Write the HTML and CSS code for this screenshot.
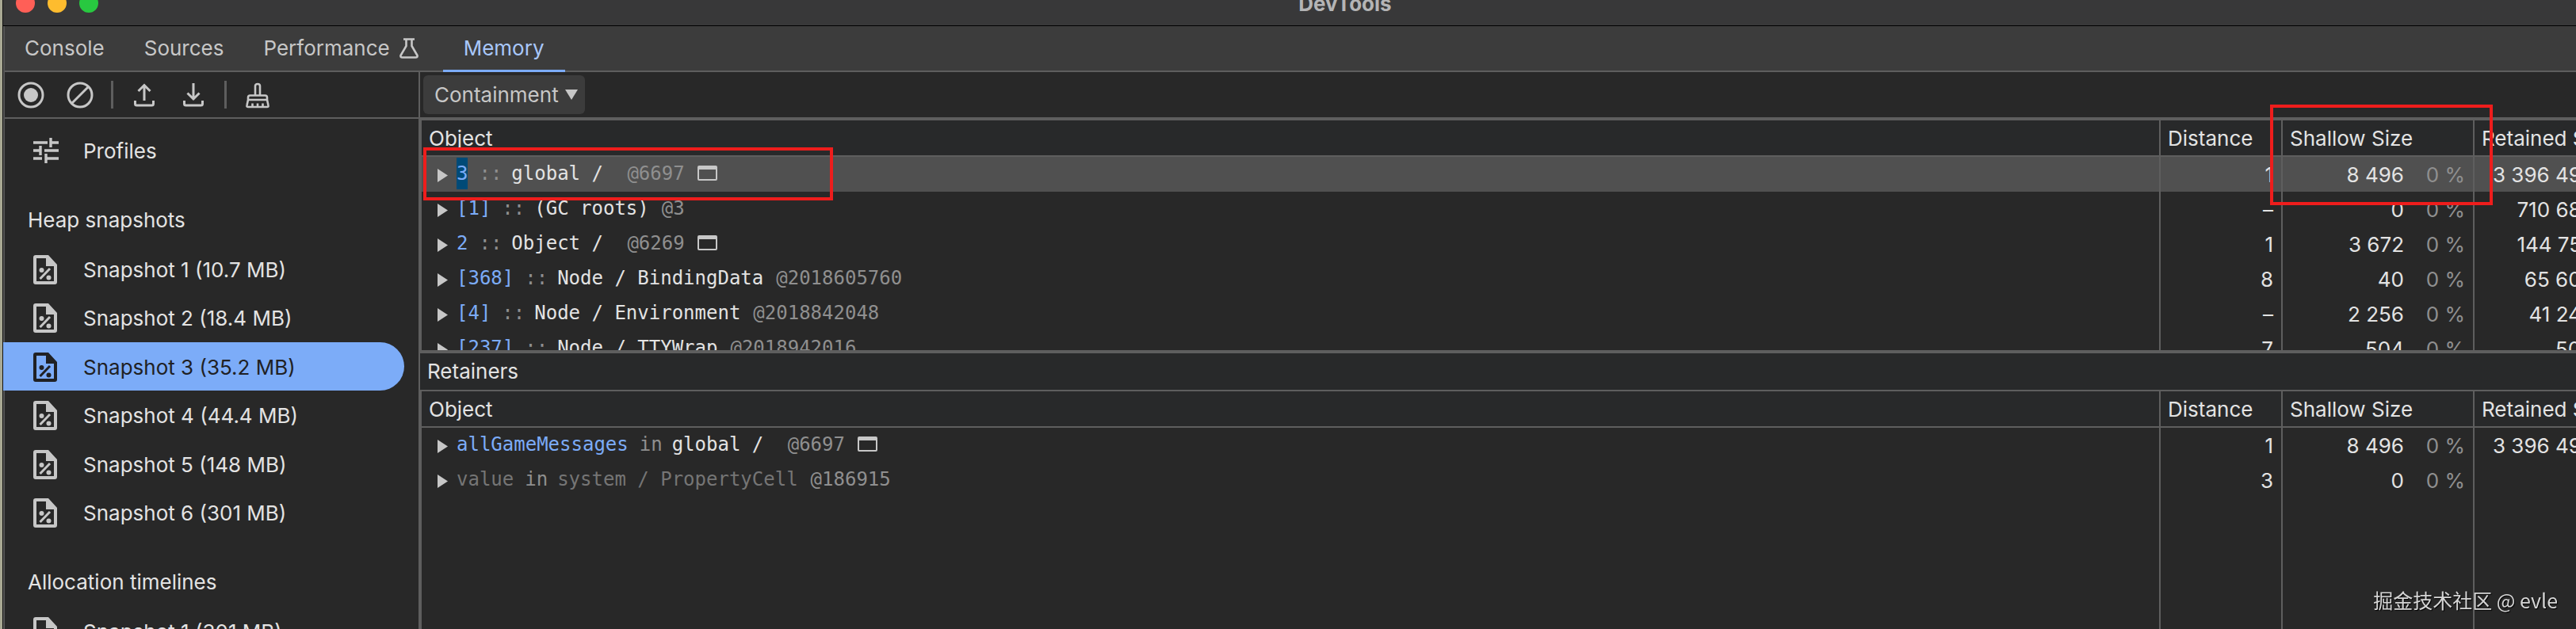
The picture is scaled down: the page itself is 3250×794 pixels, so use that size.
FILE: index.html
```html
<!DOCTYPE html>
<html lang="en">
<head>
    <meta charset="UTF-8">
    <meta name="viewport" content="width=device-width, initial-scale=1.0">
    <title>DevTools</title>
    <link rel="stylesheet" href="styles.css">
</head>
<body>
    <!-- Shared icons -->
    <svg class="icon-defs" aria-hidden="true">
        <symbol id="icon-snapshot" viewBox="0 0 30 37">
            <path fill="currentColor" fill-rule="evenodd" d="M3 0H19L30 12V34Q30 37 27 37H3Q0 37 0 34V3Q0 0 3 0ZM4 4V33H26V14H16V4Z"/>
            <path fill="none" stroke="currentColor" stroke-width="3" d="M8.500 30L21 17"/>
            <circle fill="currentColor" cx="10.500" cy="19" r="3"/>
            <circle fill="currentColor" cx="19.500" cy="28.500" r="3"/>
        </symbol>
        <symbol id="icon-arrow" viewBox="0 0 13 17">
            <path fill="currentColor" d="M0 0L13 8.500L0 17Z"/>
        </symbol>
        <symbol id="icon-window" viewBox="0 0 25 19">
            <path fill="currentColor" fill-rule="evenodd" d="M2 0H23Q25 0 25 2V17Q25 19 23 19H2Q0 19 0 17V2Q0 0 2 0ZM2 5V17H23V5Z"/>
        </symbol>
    </svg>

    <div class="window">
        <header class="title-bar">
            <span class="light red"></span>
            <span class="light yellow"></span>
            <span class="light green"></span>
            <h1>DevTools</h1>
        </header>

        <div class="content">
            <nav class="tabs">
                <a href="#console">Console</a>
                <a href="#sources">Sources</a>
                <a href="#performance">Performance
                    <svg width="24" height="26" viewBox="0 0 24 26" fill="none" stroke="currentColor" stroke-width="2.600" stroke-linejoin="round">
                        <path d="M5 1.500H19M8.500 2V10L1.500 22Q1 24.500 3.500 24.500H20.500Q23 24.500 22.500 22L15.500 10V2"/>
                    </svg>
                </a>
                <a href="#memory" class="active">Memory</a>
            </nav>

            <div class="panels">
                <aside class="sidebar">
                    <div class="toolbar">
                        <button type="button" aria-label="Take heap snapshot">
                            <svg width="34" height="34" viewBox="0 0 34 34"><circle cx="17" cy="17" r="15" fill="none" stroke="currentColor" stroke-width="3"/><circle cx="17" cy="17" r="9" fill="currentColor"/></svg>
                        </button>
                        <button type="button" aria-label="Clear all profiles">
                            <svg width="34" height="34" viewBox="0 0 34 34" fill="none" stroke="currentColor" stroke-width="3"><circle cx="17" cy="17" r="15"/><path d="M6.500 27.500L27.500 6.500"/></svg>
                        </button>
                        <span class="separator"></span>
                        <button type="button" aria-label="Load profile">
                            <svg width="34" height="34" viewBox="0 0 34 34" fill="none" stroke="currentColor" stroke-width="3"><path d="M17 24V4M9.500 12L17 4.500L24.500 12M5.500 24V28Q5.500 30 7.500 30H26.500Q28.500 30 28.500 28V24"/></svg>
                        </button>
                        <button type="button" aria-label="Save profile">
                            <svg width="34" height="34" viewBox="0 0 34 34" fill="none" stroke="currentColor" stroke-width="3"><path d="M17 2V22M9.500 14.500L17 22L24.500 14.500M5.500 24V28Q5.500 30 7.500 30H26.500Q28.500 30 28.500 28V24"/></svg>
                        </button>
                        <span class="separator"></span>
                        <button type="button" aria-label="Collect garbage">
                            <svg width="34" height="34" viewBox="0 0 34 34" fill="none" stroke="currentColor" stroke-width="2.600" stroke-linejoin="round"><path d="M14 17V5.500Q14 3 17 3T20 5.500V17M5 23V20Q5 17.500 7.500 17.500H26.500Q29 17.500 29 20V23ZM5 23L3.500 30Q3 32 5 32H29Q31 32 30.500 30L29 23M10.500 32V27.500M17 32V27.500M23.500 32V27.500"/></svg>
                        </button>
                    </div>

                    <div class="profiles">
                        <a href="#profiles" class="item">
                            <svg width="32" height="32" viewBox="0 0 32 32" fill="none" stroke="currentColor" stroke-width="3.400"><path d="M0 6H18M22 0V12M22 6H32M0 16H9M9 10V22M14 16H32M0 26H11M16 20V32M16 26H32"/></svg>
                            Profiles
                        </a>
                        <h2>Heap snapshots</h2>
                        <div class="snapshots">
                            <a href="#heap1" class="item"><svg width="30" height="37"><use href="#icon-snapshot"/></svg>Snapshot 1 (10.7 MB)</a>
                            <a href="#heap2" class="item"><svg width="30" height="37"><use href="#icon-snapshot"/></svg>Snapshot 2 (18.4 MB)</a>
                            <a href="#heap3" class="item selected"><svg width="30" height="37"><use href="#icon-snapshot"/></svg>Snapshot 3 (35.2 MB)</a>
                            <a href="#heap4" class="item"><svg width="30" height="37"><use href="#icon-snapshot"/></svg>Snapshot 4 (44.4 MB)</a>
                            <a href="#heap5" class="item"><svg width="30" height="37"><use href="#icon-snapshot"/></svg>Snapshot 5 (148 MB)</a>
                            <a href="#heap6" class="item"><svg width="30" height="37"><use href="#icon-snapshot"/></svg>Snapshot 6 (301 MB)</a>
                        </div>
                        <h2>Allocation timelines</h2>
                        <div class="snapshots">
                            <a href="#timeline1" class="item"><svg width="30" height="37"><use href="#icon-snapshot"/></svg>Snapshot 1 (301 MB)</a>
                        </div>
                    </div>
                </aside>

                <main class="main">
                    <div class="toolbar">
                        <div class="perspective">
                            <select aria-label="Perspective">
                                <option>Containment</option>
                            </select>
                            <svg width="16" height="13" viewBox="0 0 16 13"><path fill="currentColor" d="M0 0H16L8 13Z"/></svg>
                        </div>
                    </div>

                    <section class="grid objects">
                        <table>
                            <colgroup><col><col class="col-distance"><col class="col-shallow"><col class="col-retained"></colgroup>
                            <thead>
                                <tr><th>Object</th><th>Distance</th><th>Shallow Size</th><th>Retained Size</th></tr>
                            </thead>
                            <tbody>
                                <tr class="selected">
                                    <td><div class="object"><svg class="arrow"><use href="#icon-arrow"/></svg><span class="key marked">3</span><span class="sep">::</span><span class="name">global / </span><span class="id">@6697</span><svg class="link"><use href="#icon-window"/></svg></div></td>
                                    <td>1</td>
                                    <td>8 496<span class="percent">0 %</span></td>
                                    <td>3 396 496<span class="percent">10 %</span></td>
                                </tr>
                                <tr>
                                    <td><div class="object"><svg class="arrow"><use href="#icon-arrow"/></svg><span class="key">[1]</span><span class="sep">::</span><span class="name">(GC roots)</span><span class="id">@3</span></div></td>
                                    <td>–</td>
                                    <td>0<span class="percent">0 %</span></td>
                                    <td>710 680<span class="percent">2 %</span></td>
                                </tr>
                                <tr>
                                    <td><div class="object"><svg class="arrow"><use href="#icon-arrow"/></svg><span class="key">2</span><span class="sep">::</span><span class="name">Object / </span><span class="id">@6269</span><svg class="link"><use href="#icon-window"/></svg></div></td>
                                    <td>1</td>
                                    <td>3 672<span class="percent">0 %</span></td>
                                    <td>144 752<span class="percent">0 %</span></td>
                                </tr>
                                <tr>
                                    <td><div class="object"><svg class="arrow"><use href="#icon-arrow"/></svg><span class="key">[368]</span><span class="sep">::</span><span class="name">Node / BindingData</span><span class="id">@2018605760</span></div></td>
                                    <td>8</td>
                                    <td>40<span class="percent">0 %</span></td>
                                    <td>65 600<span class="percent">0 %</span></td>
                                </tr>
                                <tr>
                                    <td><div class="object"><svg class="arrow"><use href="#icon-arrow"/></svg><span class="key">[4]</span><span class="sep">::</span><span class="name">Node / Environment</span><span class="id">@2018842048</span></div></td>
                                    <td>–</td>
                                    <td>2 256<span class="percent">0 %</span></td>
                                    <td>41 248<span class="percent">0 %</span></td>
                                </tr>
                                <tr>
                                    <td><div class="object"><svg class="arrow"><use href="#icon-arrow"/></svg><span class="key">[237]</span><span class="sep">::</span><span class="name">Node / TTYWrap</span><span class="id">@2018942016</span></div></td>
                                    <td>7</td>
                                    <td>504<span class="percent">0 %</span></td>
                                    <td>504<span class="percent">0 %</span></td>
                                </tr>
                            </tbody>
                        </table>
                    </section>

                    <h3>Retainers</h3>

                    <section class="grid retainers">
                        <table>
                            <colgroup><col><col class="col-distance"><col class="col-shallow"><col class="col-retained"></colgroup>
                            <thead>
                                <tr><th>Object</th><th>Distance</th><th>Shallow Size</th><th>Retained Size</th></tr>
                            </thead>
                            <tbody>
                                <tr>
                                    <td><div class="object"><svg class="arrow"><use href="#icon-arrow"/></svg><span class="key">allGameMessages</span><span class="sep">in</span><span class="name">global / </span><span class="id">@6697</span><svg class="link"><use href="#icon-window"/></svg></div></td>
                                    <td>1</td>
                                    <td>8 496<span class="percent">0 %</span></td>
                                    <td>3 396 496<span class="percent">10 %</span></td>
                                </tr>
                                <tr class="internal">
                                    <td><div class="object"><svg class="arrow"><use href="#icon-arrow"/></svg><span class="key">value</span><span class="sep">in</span><span class="name">system / PropertyCell</span><span class="id">@186915</span></div></td>
                                    <td>3</td>
                                    <td>0<span class="percent">0 %</span></td>
                                    <td></td>
                                </tr>
                                <tr class="filler"><td></td><td></td><td></td><td></td></tr>
                            </tbody>
                        </table>
                    </section>

                    <div class="highlight highlight-object"></div>
                    <div class="highlight highlight-size"></div>
                </main>
            </div>
        </div>
    </div>
    <div class="watermark">掘金技术社区 @ evle</div>
</body>
</html>
```
FILE: styles.css
```css
* {
    box-sizing: border-box;
}
body {
    margin: 0;
    padding-left: 3px;
    height: 100vh;
    overflow: hidden;
    background-color: #a9a994;
    color: #e3e3e3;
    font-family: Inter, Roboto, sans-serif;
    font-size: 26px;
}
h1, h2, h3 {
    margin: 0;
    font-size: 26px;
    font-weight: normal;
}
a {
    color: inherit;
    text-decoration: none;
}
.icon-defs {
    display: none;
}
/* The window runs past the right edge of the page */
.window {
    width: calc(100% + 140px);
    height: 100vh;
    display: flex;
    flex-direction: column;
    border-left: 1px solid #111;
    background-color: #282828;
}
.title-bar {
    flex: none;
    height: 57px;
    margin-top: -24px;
    padding: 0 16px;
    display: flex;
    align-items: center;
    gap: 16px;
    background-color: #383839;
    border-bottom: 1px solid #000;
}
.title-bar h1 {
    flex: 1;
    padding-right: 120px;
    text-align: center;
    font-size: 26px;
    font-weight: bold;
    color: #b4b4b5;
}
.light {
    width: 24px;
    height: 24px;
    border-radius: 50%;
}
.red {
    background-color: #ff5f57;
}
.yellow {
    background-color: #febc2e;
}
.green {
    background-color: #28c840;
}
.content {
    flex: 1;
    min-height: 0;
    display: flex;
    flex-direction: column;
    border-left: 2px solid #565656;
}
.tabs {
    flex: none;
    height: 58px;
    display: flex;
    background-color: #3c3c3c;
    border-bottom: 2px solid #5e5e5e;
    color: #c7c7c7;
}
.tabs a {
    height: 58px;
    padding: 0 25px;
    display: flex;
    align-items: center;
    gap: 12px;
    border-bottom: 3px solid transparent;
}
.tabs svg {
    margin-right: 6px;
}
.tabs .active {
    padding: 0 26px;
    color: #a8c7fa;
    border-bottom-color: #7cacf8;
}
.panels {
    flex: 1;
    min-height: 0;
    display: flex;
}
.sidebar {
    flex: none;
    width: 524px;
    border-right: 2px solid #5e5e5e;
}
.toolbar {
    flex: none;
    height: 59px;
    padding: 0 2px;
    display: flex;
    align-items: center;
    border-bottom: 2px solid #5e5e5e;
    color: #c7c7c7;
}
.toolbar button {
    width: 62px;
    height: 50px;
    padding: 0;
    border: none;
    background: none;
    color: inherit;
    display: flex;
    justify-content: center;
    align-items: center;
}
.separator {
    width: 3px;
    height: 35px;
    margin: 0 8px;
    background-color: #5e5e5e;
}

/* Sidebar list */
.profiles {
    padding-top: 9px;
}
.profiles h2 {
    height: 62px;
    margin-top: 26px;
    padding-left: 29px;
    line-height: 62px;
}
.item {
    height: 62px;
    padding-left: 36px;
    display: flex;
    align-items: center;
    gap: 31px;
}
.item svg {
    color: #c7c7c7;
}
.snapshots {
    display: grid;
    grid-auto-rows: 61px 62px;
}
.snapshots .item {
    height: 61px;
    padding-top: 2px;
    gap: 33px;
}
.snapshots .selected {
    margin-left: -2px;
    margin-right: 18px;
    padding-left: 38px;
    border-radius: 0 31px 31px 0;
    background-color: #7cacf8;
    color: #202124;
}
.selected > svg {
    color: #202124;
}

/* Main area */
.main {
    position: relative;
    flex: 1;
    min-width: 0;
    display: flex;
    flex-direction: column;
}
.main .toolbar {
    padding: 0 4px;
}
.perspective {
    display: grid;
    align-items: center;
}
.perspective select,
.perspective svg {
    grid-area: 1 / 1;
}
.perspective select {
    appearance: none;
    height: 49px;
    padding: 0 33px 0 14px;
    border: none;
    border-radius: 6px;
    background-color: #3c3c3c;
    color: #c7c7c7;
    font: inherit;
}
.perspective svg {
    justify-self: end;
    margin-right: 9px;
    pointer-events: none;
}
.main h3 {
    flex: none;
    height: 50px;
    padding-left: 9px;
    line-height: 46px;
    background-color: #28292a;
    border-top: 2px solid #5e5e5e;
    border-bottom: 2px solid #5e5e5e;
}
.grid {
    overflow: hidden;
    border-left: 2px solid #5e5e5e;
}
.objects {
    flex: none;
    height: 294px;
    border-top: 2px solid #5e5e5e;
    border-bottom: 2px solid #5e5e5e;
}
.retainers {
    flex: 1;
}
table {
    width: calc(100% - 30px);
    table-layout: fixed;
    border-collapse: separate;
    border-spacing: 0;
}
.retainers table {
    height: 100%;
}
.col-distance {
    width: 154px;
}
.col-shallow {
    width: 242px;
}
.col-retained {
    width: 240px;
}
th {
    height: 46px;
    padding: 0 9px;
    text-align: left;
    font-weight: normal;
    background-color: #28292a;
    border-bottom: 2px solid #5e5e5e;
}
td {
    height: 44px;
    padding: 0 10px 0 0;
    text-align: right;
    white-space: nowrap;
}
th + th,
td + td {
    border-left: 2px solid #5e5e5e;
}
tr.selected td {
    background-color: #505050;
}
.filler td {
    height: auto;
}
.percent {
    display: inline-block;
    width: 77px;
    color: #8f8f8f;
}
.object {
    display: flex;
    align-items: center;
    padding: 0 0 2px 20px;
    font-family: "DejaVu Sans Mono", monospace;
    font-size: 24px;
    line-height: 40px;
    white-space: pre;
}
.arrow {
    width: 13px;
    height: 17px;
    margin: 5px 11px 0 0;
    color: #c7c7c7;
}
.key {
    color: #7cacf8;
}
.marked {
    background-color: #004a77;
}
.sep {
    margin: 0 12px 0 14px;
    color: #8f8f8f;
}
.id {
    margin-left: 16px;
    color: #8f8f8f;
}
.link {
    width: 25px;
    height: 19px;
    margin: 0 0 2px 16px;
    color: #c7c7c7;
}
.internal .key,
.internal .name {
    color: #757575;
}

/* Red annotation boxes */
.highlight {
    position: absolute;
    border: 4px solid #ee1d1c;
}
.highlight-object {
    top: 95px;
    left: 4px;
    width: 517px;
    height: 67px;
}
.highlight-size {
    top: 41px;
    right: 245px;
    width: 281px;
    height: 127px;
}
.watermark {
    position: fixed;
    right: 23px;
    bottom: 19px;
    font-family: "Noto Sans CJK SC", sans-serif;
    font-size: 25px;
    line-height: 36px;
    color: #d6d6d6;
    text-shadow: 1px 1px 1px #000;
}
```
